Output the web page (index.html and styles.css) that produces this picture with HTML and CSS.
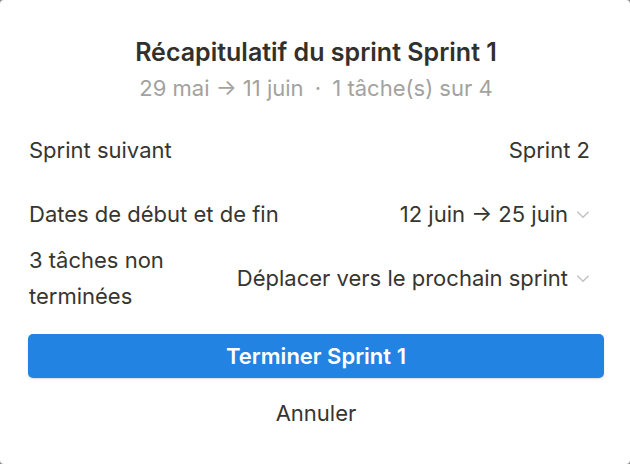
FILE: index.html
```html
<!DOCTYPE html>
<html lang="fr">
<head>
<meta charset="utf-8">
<link rel="stylesheet" href="styles.css">
</head>
<body>
<div class="dialog">
  <header class="head">
    <h1 class="title">Récapitulatif du sprint Sprint 1</h1>
    <p class="sub">29 mai → 11 juin <span class="dot">·</span> 1 tâche(s) sur 4</p>
  </header>
  <div class="rows">
    <div class="row r1">
      <div class="label">Sprint suivant</div>
      <div class="value">Sprint 2</div>
    </div>
    <div class="row r2">
      <div class="label">Dates de début et de fin</div>
      <div class="value">12 juin → 25 juin <svg class="chev" viewBox="0 0 12 8"><path d="M1 1.5 6 6.5 11 1.5" fill="none" stroke="currentColor" stroke-width="1.3"/></svg></div>
    </div>
    <div class="row r3">
      <div class="label">3 tâches non<br>terminées</div>
      <div class="value">Déplacer vers le prochain sprint <svg class="chev" viewBox="0 0 12 8"><path d="M1 1.5 6 6.5 11 1.5" fill="none" stroke="currentColor" stroke-width="1.3"/></svg></div>
    </div>
  </div>
  <button class="primary">Terminer Sprint 1</button>
  <button class="cancel">Annuler</button>
</div>
</body>
</html>
```
FILE: styles.css
```css
html, body { margin: 0; padding: 0; }
body {
  background: #8a8a8a;
  width: 630px;
  height: 464px;
  font-family: Inter, "Noto Sans", sans-serif;
  color: #37352f;
}
.dialog {
  background: #fff;
  width: 630px;
  height: 464px;
  border-radius: 4px;
  box-sizing: border-box;
  padding: 34px 26px 0 28px;
  display: flex;
  flex-direction: column;
}
.head { text-align: center; }
.title {
  margin: 0;
  font-size: 25px;
  font-weight: 600;
  line-height: 36px;
  color: #32302c;
}
.sub {
  margin: 0;
  font-size: 22px;
  line-height: 36px;
  color: #a3a29f;
}
.dot { margin: 0 5px; }
.rows {
  margin-top: 12px;
  padding-right: 14px;
  display: flex;
  flex-direction: column;
}
.row {
  display: flex;
  align-items: center;
  justify-content: space-between;
  font-size: 22px;
  line-height: 36px;
  height: 64px;
}
.label { padding-left: 1px; }
.value { display: flex; align-items: center; }
.chev { width: 14px; height: 9px; margin-left: 8px; color: #c4c3c0; }
.primary {
  margin-top: 24px;
  height: 44px;
  flex: none;
  border: none;
  border-radius: 5px;
  background: #2383e2;
  color: #fff;
  font-family: inherit;
  font-size: 22px;
  font-weight: 600;
  box-shadow: 0 1px 2px rgba(15,15,15,0.15);
}
.cancel {
  margin-top: 17px;
  padding: 0 6px;
  align-self: center;
  background: none;
  border: none;
  font-family: inherit;
  font-size: 22px;
  color: #37352f;
  line-height: 36px;
}
```
